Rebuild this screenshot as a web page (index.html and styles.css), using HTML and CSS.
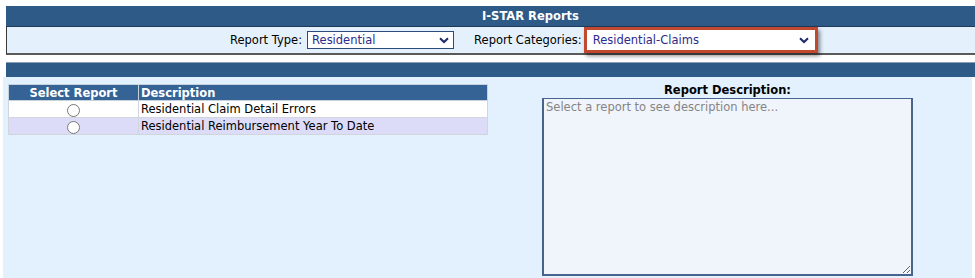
FILE: index.html
```html
<!DOCTYPE html>
<html lang="en">
<head>
  <meta charset="UTF-8" />
  <title>I-STAR Reports</title>
  <link rel="stylesheet" href="styles.css">
</head>
<body>
  <div class="top">
    <div class="title-bar">I-STAR Reports</div>
    <div class="filter-bar">
      <label for="reportType">Report Type:</label>
      <span class="select-wrap type">
        <select id="reportType">
          <option>Residential</option>
        </select>
        <svg class="chev" width="10" height="7" viewBox="0 0 10 7"><path d="M1 1.2 L5 5 L9 1.2" fill="none" stroke="#1c2a6b" stroke-width="2"/></svg>
      </span>
      <label for="reportCat" class="cat-label">Report Categories:</label>
      <span class="highlight">
        <span class="select-wrap cat">
          <select id="reportCat">
            <option>Residential-Claims</option>
          </select>
          <svg class="chev" width="10" height="7" viewBox="0 0 10 7"><path d="M1 1.2 L5 5 L9 1.2" fill="none" stroke="#1c2a6b" stroke-width="2"/></svg>
        </span>
      </span>
    </div>
  </div>

  <div class="sub-bar"></div>

  <div class="content">
    <table class="reports">
      <thead>
        <tr><th class="col-select">Select Report</th><th class="col-desc">Description</th></tr>
      </thead>
      <tbody>
        <tr><td class="col-select"><input type="radio" name="report" /></td><td>Residential Claim Detail Errors</td></tr>
        <tr class="alt"><td class="col-select"><input type="radio" name="report" /></td><td>Residential Reimbursement Year To Date</td></tr>
      </tbody>
    </table>

    <div class="desc-panel">
      <div class="desc-title">Report Description:</div>
      <textarea placeholder="Select a report to see description here..."></textarea>
    </div>
  </div>
</body>
</html>
```

FILE: styles.css
```css
* {
  box-sizing: border-box;
}

body {
  margin: 0;
  background: #fff;
  font-family: 'DejaVu Sans', Verdana, Tahoma, sans-serif;
  font-size: 11px;
  color: #000;
}

/* Top header */
.top {
  margin: 6px 0 0 6px;
}
.title-bar {
  background: #2e5a87;
  border-bottom: 1px solid #1d3a5a;
  color: #fff;
  font-weight: bold;
  font-size: 11.5px;
  text-align: center;
  height: 21px;
  line-height: 21px;
  padding-left: 80px;
}
.filter-bar {
  background: #e4f1fd;
  border-left: 1px solid #3a3a3a;
  border-bottom: 2px solid #5a5a5a;
  height: 28px;
  display: flex;
  align-items: center;
  padding-left: 223px;
  font-size: 11.5px;
}
.filter-bar label {
  margin-right: 5px;
}
.cat-label {
  margin-left: 20px;
}

.select-wrap {
  position: relative;
  display: inline-block;
}
.select-wrap select {
  appearance: none;
  -webkit-appearance: none;
  font-family: inherit;
  font-size: 11.5px;
  color: #2b2b8c;
  background: #fff;
  border: 1px solid #2c4a7a;
  height: 18px;
  padding: 0 0 0 4px;
  border-radius: 0;
  outline: none;
}
.select-wrap.type select {
  width: 147px;
}
.select-wrap.cat select {
  width: 226px;
  border-color: #fff;
}
.chev {
  position: absolute;
  right: 5px;
  top: 6px;
  pointer-events: none;
}

/* Annotation highlight round the categories select */
.highlight {
  display: inline-block;
  border: 3px solid #c0492f;
  padding: 1px;
  margin-left: -3px;
  box-shadow: 2px 3px 4px rgba(0, 0, 0, 0.45);
  background: #fff;
  line-height: 0;
}

.sub-bar {
  margin: 7px 0 0 6px;
  height: 15px;
  background: #2e5a87;
  border-top: 1px solid #8a9fb5;
}

/* Content */
.content {
  margin: 0 3px 0 3px;
  background: #e3f0fd;
  height: 201px;
  display: flex;
  align-items: flex-start;
  padding-top: 7px;
}

.reports {
  margin-left: 5px;
  width: 480px;
  border-collapse: collapse;
  font-size: 11.5px;
}
.reports th {
  background: #356395;
  color: #fff;
  font-weight: bold;
  text-align: left;
  height: 16px;
  padding: 0 2px;
  border: 1px solid #c8d2dc;
}
.reports th.col-select {
  text-align: center;
  width: 130px;
}
.reports td {
  background: #fff;
  height: 17px;
  padding: 0 2px;
  border: 1px solid #d0d6dc;
}
.reports tr.alt td {
  background: #dcdcf9;
}
.reports td.col-select {
  text-align: center;
}
.reports input[type="radio"] {
  margin: 3px 0 0 0;
  width: 13px;
  height: 13px;
  vertical-align: top;
}

.desc-panel {
  margin-left: 54px;
  width: 371px;
  display: flex;
  flex-direction: column;
}
.desc-title {
  font-weight: bold;
  text-align: center;
  font-size: 11.5px;
  height: 14px;
  line-height: 13px;
}
.desc-panel textarea {
  width: 371px;
  height: 178px;
  background: #f0f4fb;
  border: 2px solid #47648f;
  border-top-width: 1px;
  font-family: inherit;
  font-size: 11.5px;
  padding: 1px 2px;
  resize: both;
}
.desc-panel textarea::placeholder {
  color: #858585;
}
```
